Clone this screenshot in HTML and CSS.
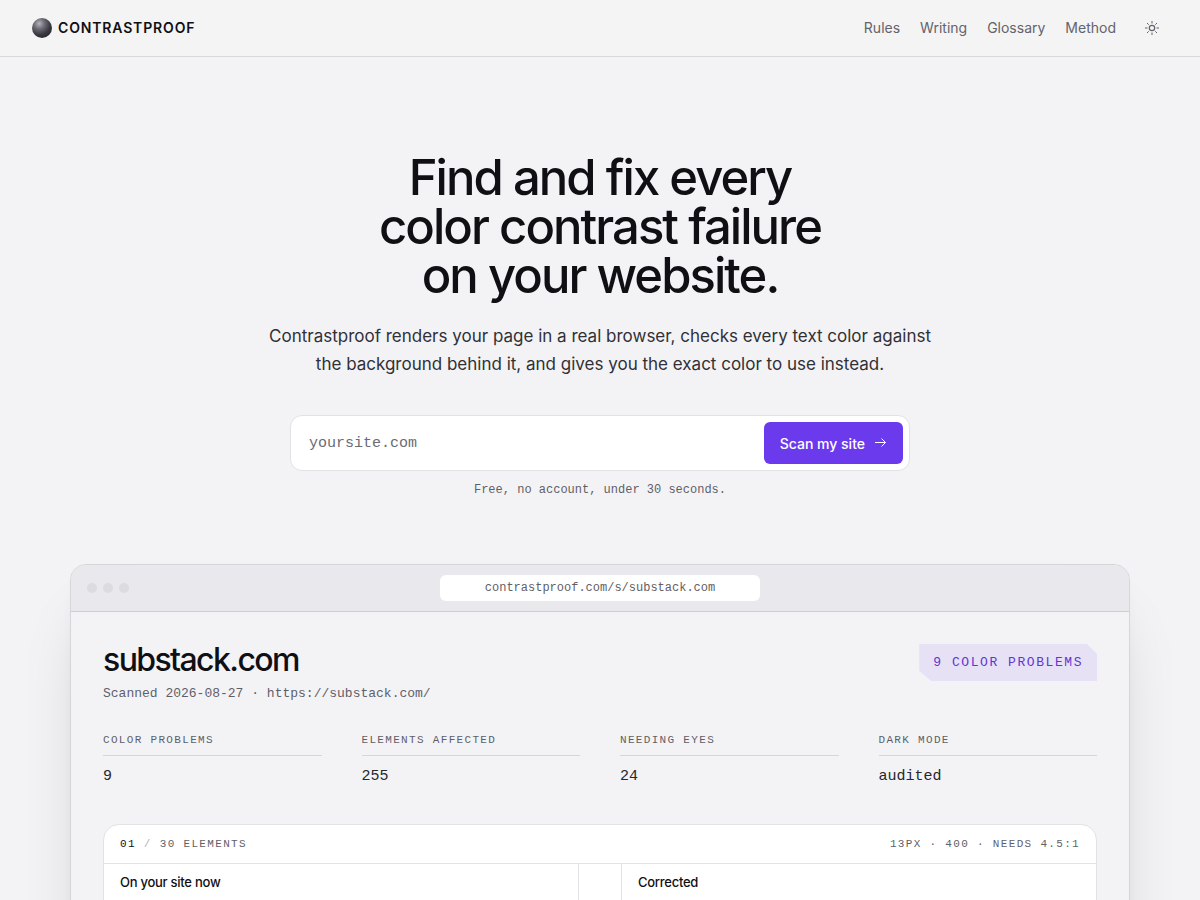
FILE: index.html
```html
<!DOCTYPE html>
<html lang="en">
<head>
    <meta charset="UTF-8">
    <meta name="viewport" content="width=device-width, initial-scale=1.0">
    <title>Contrastproof</title>
    <link rel="stylesheet" href="styles.css">
</head>
<body>
    <header class="site-header">
        <a href="/" class="brand">
            <span class="brand-mark"></span>
            CONTRASTPROOF
        </a>
        <nav class="nav">
            <a href="/rules">Rules</a>
            <a href="/writing">Writing</a>
            <a href="/glossary">Glossary</a>
            <a href="/method">Method</a>
            <button class="theme-toggle" type="button" aria-label="Toggle theme">
                <svg width="16" height="16" viewBox="0 0 16 16" fill="none" stroke="currentColor">
                    <circle cx="8" cy="8" r="2.7" stroke-width="1.2"/>
                    <path d="M8 1v2.5M8 12.5V15M1 8h2.5M12.5 8H15M3 3l1.7 1.7M11.3 11.3L13 13M3 13l1.7-1.7M11.3 4.7L13 3"/>
                </svg>
            </button>
        </nav>
    </header>

    <main>
        <section class="hero">
            <h1>Find and fix every<br>color contrast failure<br>on your website.</h1>
            <p class="lede">Contrastproof renders your page in a real browser, checks every text color against<br>the background behind it, and gives you the exact color to use instead.</p>

            <form class="scan-form">
                <input type="text" id="site" aria-label="Website address" placeholder="yoursite.com">
                <button class="scan-button" type="submit">
                    Scan my site
                    <svg width="12" height="12" viewBox="0 0 12 12" fill="none" stroke="currentColor">
                        <path d="M0 5.5h10.5M6.5 1.5l4 4-4 4"/>
                    </svg>
                </button>
            </form>
            <p class="note">Free, no account, under 30 seconds.</p>
        </section>

        <section class="window">
            <div class="window-bar">
                <div class="dots"><i></i><i></i><i></i></div>
                <div class="address">contrastproof.com/s/substack.com</div>
            </div>

            <div class="report">
                <div class="report-head">
                    <div>
                        <h2>substack.com</h2>
                        <p class="scanned">Scanned 2026-08-27 · https://substack.com/</p>
                    </div>
                    <span class="badge">9 COLOR PROBLEMS</span>
                </div>

                <dl class="stats">
                    <div>
                        <dt>COLOR PROBLEMS</dt>
                        <dd>9</dd>
                    </div>
                    <div>
                        <dt>ELEMENTS AFFECTED</dt>
                        <dd>255</dd>
                    </div>
                    <div>
                        <dt>NEEDING EYES</dt>
                        <dd>24</dd>
                    </div>
                    <div>
                        <dt>DARK MODE</dt>
                        <dd>audited</dd>
                    </div>
                </dl>

                <article class="finding">
                    <div class="finding-head">
                        <div class="finding-id"><b>01</b><span class="slash">/</span>30 ELEMENTS</div>
                        <div>13PX · 400 · NEEDS 4.5:1</div>
                    </div>
                    <div class="compare">
                        <h3>On your site now</h3>
                        <div class="divider"></div>
                        <h3>Corrected</h3>
                    </div>
                </article>
            </div>
        </section>
    </main>
</body>
</html>
```

FILE: styles.css
```css
* {
    box-sizing: border-box;
    margin: 0;
}

body {
    font-family: Inter, "Liberation Sans", sans-serif;
    background: #f3f3f6;
    color: #101014;
}

a {
    color: inherit;
    text-decoration: none;
}

/* Header */
.site-header {
    display: flex;
    align-items: center;
    justify-content: space-between;
    height: 57px;
    padding: 0 32px;
    background: #f4f4f4;
    border-bottom: 1px solid #d9d9dd;
}

.brand {
    display: flex;
    align-items: center;
    gap: 6px;
    font-size: 14px;
    font-weight: 600;
    line-height: 20px;
    letter-spacing: 0.06em;
}

.brand-mark {
    width: 20px;
    height: 20px;
    border-radius: 50%;
    background: radial-gradient(circle at 36% 28%, #b4b4c0 0%, #6c6c75 28%, #38383f 58%, #1b1b20 100%);
}

.nav {
    display: flex;
    align-items: center;
    gap: 20px;
    font-size: 14px;
    line-height: 20px;
    color: #63636b;
}

.theme-toggle {
    display: flex;
    padding: 8px;
    border: none;
    background: none;
    color: inherit;
    cursor: pointer;
}

/* Hero */
.hero {
    display: flex;
    flex-direction: column;
    align-items: center;
    padding: 96px 24px 0;
    text-align: center;
}

h1 {
    font-size: 49px;
    font-weight: 500;
    line-height: 49px;
    letter-spacing: -0.04em;
}

.lede {
    margin-top: 22px;
    font-size: 17px;
    line-height: 28px;
    color: #303036;
}

.scan-form {
    display: flex;
    width: 100%;
    max-width: 620px;
    margin-top: 37px;
    padding: 6px;
    background: #fff;
    border: 1px solid #e2e2e6;
    border-radius: 12px;
}

.scan-form input {
    flex: 1;
    min-width: 0;
    padding: 0 12px;
    border: none;
    outline: none;
    background: none;
    font-family: "Liberation Mono", monospace;
    font-size: 15px;
    color: #101014;
}

.scan-form input::placeholder {
    color: #6b6b74;
}

.scan-button {
    display: flex;
    align-items: center;
    gap: 10px;
    height: 42px;
    padding: 0 16px;
    border: none;
    border-radius: 6px;
    background: #6c3aed;
    color: #fff;
    font-family: inherit;
    font-size: 14px;
    font-weight: 500;
    cursor: pointer;
}

.note {
    margin-top: 10px;
    font-family: "Liberation Mono", monospace;
    font-size: 12px;
    line-height: 18px;
    color: #5f5f68;
}

/* Sample report */
.window {
    max-width: 1060px;
    margin: 65px auto 0;
    border: 1px solid #d5d5da;
    border-radius: 16px;
    background: #f3f3f6;
    box-shadow: 0 40px 64px -24px rgba(16, 16, 20, 0.2), 0 8px 16px -8px rgba(16, 16, 20, 0.08);
    overflow: hidden;
}

.window-bar {
    display: grid;
    grid-template-columns: 1fr 320px 1fr;
    align-items: center;
    height: 47px;
    padding: 0 16px;
    background: #e9e9ed;
    border-bottom: 1px solid #cdcdd3;
}

.dots {
    display: flex;
    gap: 6px;
}

.dots i {
    width: 10px;
    height: 10px;
    border-radius: 50%;
    background: #dcdce0;
}

.address {
    border-radius: 6px;
    background: #fff;
    font-family: "Liberation Mono", monospace;
    font-size: 12px;
    line-height: 26px;
    text-align: center;
    color: #5f5f68;
}

.report {
    padding: 32px;
    font-family: "Liberation Mono", monospace;
}

.report-head {
    display: flex;
    align-items: flex-start;
    justify-content: space-between;
}

h2 {
    font-family: Inter, "Liberation Sans", sans-serif;
    font-size: 32px;
    font-weight: 500;
    line-height: 32px;
    letter-spacing: -0.05em;
}

.scanned {
    margin-top: 8px;
    font-size: 13px;
    line-height: 20px;
    color: #5f5f68;
}

.badge {
    padding: 0 14px;
    background: #e7e1f6;
    clip-path: polygon(0 0, calc(100% - 10px) 0, 100% 10px, 100% 100%, 12px 100%, 0 calc(100% - 10px));
    font-size: 13px;
    line-height: 37px;
    letter-spacing: 0.12em;
    color: #6236cf;
}

.stats {
    display: grid;
    grid-template-columns: repeat(4, 1fr);
    gap: 40px;
    margin-top: 28px;
}

.stats dt {
    padding-bottom: 7px;
    border-bottom: 1px solid #d5d5da;
    font-size: 11px;
    line-height: 16px;
    letter-spacing: 0.12em;
    color: #5f5f68;
}

.stats dd {
    margin-top: 10px;
    font-size: 15px;
    line-height: 22px;
    color: #26262c;
}

.finding {
    margin-top: 36px;
    background: #fff;
    border: 1px solid #e2e2e6;
    border-radius: 16px;
    overflow: hidden;
}

.finding-head {
    display: flex;
    justify-content: space-between;
    padding: 0 16px;
    border-bottom: 1px solid #e2e2e6;
    font-size: 11px;
    line-height: 38px;
    letter-spacing: 0.12em;
    color: #5f5f68;
}

.finding-id b {
    font-weight: 400;
    color: #101014;
}

.slash {
    margin: 0 8px;
    color: #b4b4bb;
}

.compare {
    display: grid;
    grid-template-columns: 1fr 44px 1fr;
    min-height: 180px;
}

.compare h3 {
    padding: 9px 16px;
    font-family: Inter, "Liberation Sans", sans-serif;
    font-size: 13px;
    font-weight: 500;
    line-height: 18px;
    letter-spacing: -0.02em;
}

.divider {
    border: solid #e2e2e6;
    border-width: 0 1px;
}
```
